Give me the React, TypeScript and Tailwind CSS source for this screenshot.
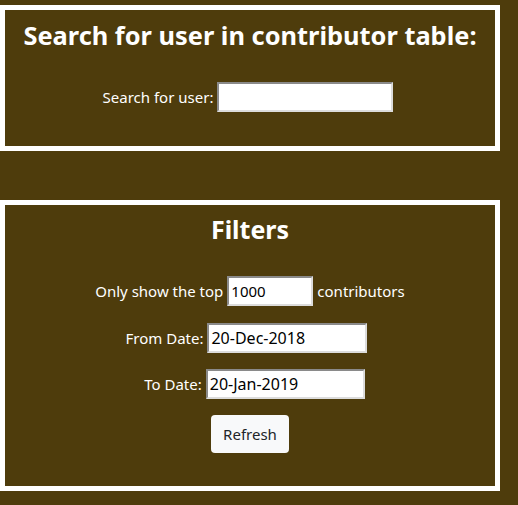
const inputClass =
  'h-[30px] border-2 border-t-[#8a8a8a] border-l-[#8a8a8a] border-b-[#dcdcdc] border-r-[#dcdcdc] bg-white px-[2px] text-black outline-none';

const App = () => {
  return (
    <div className="min-h-screen bg-[#4e3c0c] pt-[5px] font-['Noto_Sans',sans-serif] text-white">
      <div className="flex h-[146px] w-[500px] flex-col items-center border-[5px] border-white">
        <h1 className="mt-[9px] text-[25.4px] leading-[32px] font-bold">Search for user in contributor table:</h1>
        <div className="mt-[31px] flex items-center gap-[4px] pr-[4px] text-[15px]">
          <label htmlFor="user">Search for user:</label>
          <input id="user" type="text" className={`${inputClass} w-[176px] text-[15px]`} />
        </div>
      </div>

      <div className="mt-[49px] flex h-[291px] w-[500px] flex-col items-center border-[5px] border-white">
        <h2 className="mt-[8px] text-[25px] leading-[32px] font-bold">Filters</h2>
        <div className="mt-[31px] flex items-center gap-[4px] text-[15px]">
          <span>Only show the top</span>
          <input type="text" defaultValue="1000" className={`${inputClass} w-[86px] text-[15px]`} />
          <span>contributors</span>
        </div>
        <div className="mt-[17px] flex items-center gap-[4px] pr-[7px] text-[15px]">
          <label>From Date:</label>
          <input type="text" defaultValue="20-Dec-2018" className={`${inputClass} w-[160px] text-[16px]`} />
        </div>
        <div className="mt-[16px] flex items-center gap-[4px] pl-[9px] text-[15px]">
          <label>To Date:</label>
          <input type="text" defaultValue="20-Jan-2019" className={`${inputClass} w-[159px] text-[16px]`} />
        </div>
        <button
          type="button"
          className="mt-[16px] h-[38px] w-[78px] rounded-[4px] bg-[#f8f9fa] text-[15px] text-[#212529]"
        >
          Refresh
        </button>
      </div>
    </div>
  );
};

export default App;
